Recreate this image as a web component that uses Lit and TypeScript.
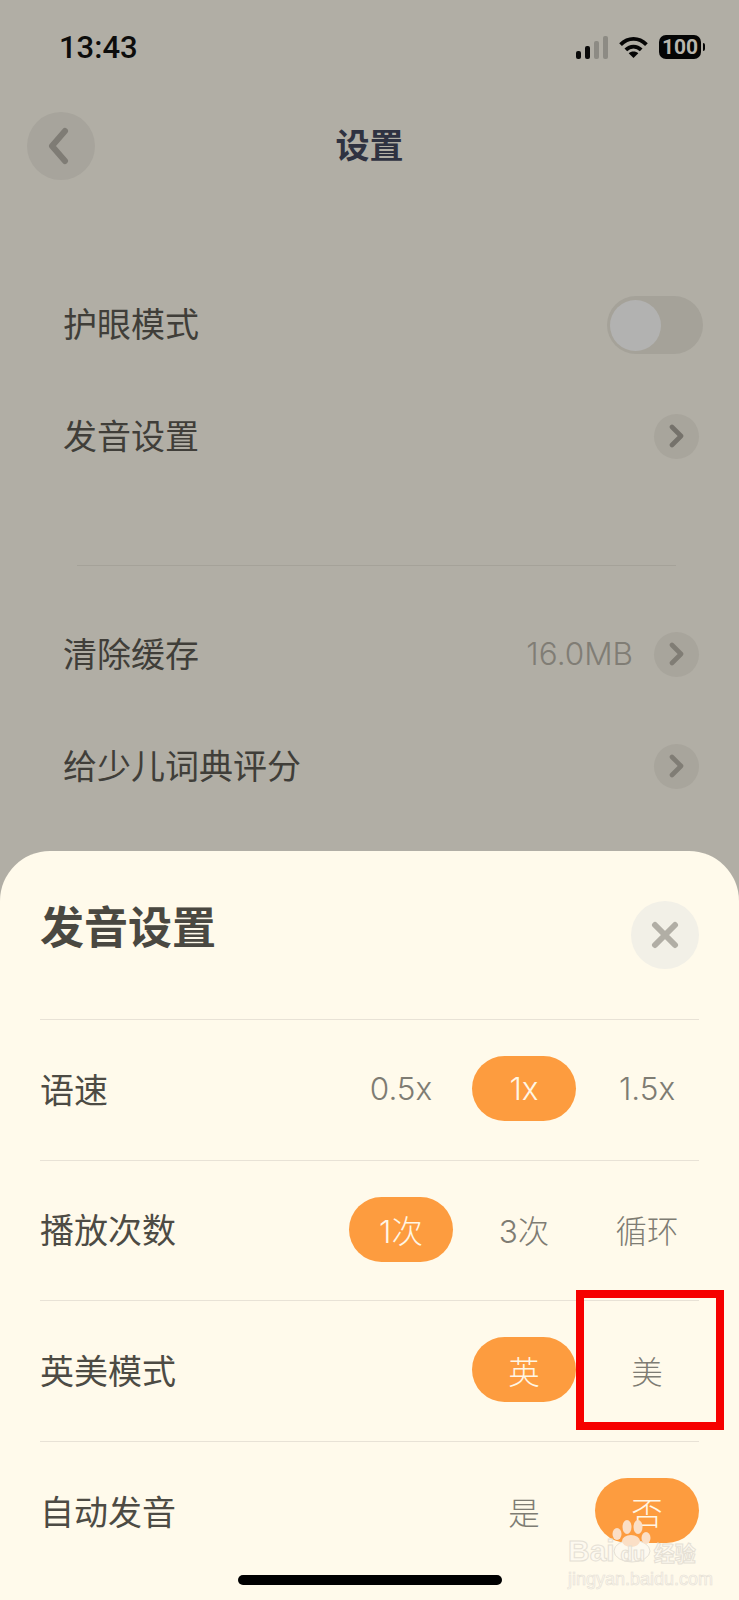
import { LitElement, html, css, svg } from "lit";
import { customElement } from "lit/decorators.js";

const rightChevron = (color: string) => svg`
  <svg width="15" height="24" viewBox="0 0 15 24" fill="none">
    <path d="M3 3 L12 12 L3 21" stroke=${color} stroke-width="4.6" stroke-linecap="round" stroke-linejoin="round"/>
  </svg>`;

type Opt = { t: string; on?: boolean };
const rows: { label: string; opts: Opt[] }[] = [
  { label: "语速", opts: [{ t: "0.5x" }, { t: "1x", on: true }, { t: "1.5x" }] },
  { label: "播放次数", opts: [{ t: "1次", on: true }, { t: "3次" }, { t: "循环" }] },
  { label: "英美模式", opts: [{ t: "英", on: true }, { t: "美" }] },
  { label: "自动发音", opts: [{ t: "是" }, { t: "否", on: true }] },
];

@customElement("app-root")
export class AppRoot extends LitElement {
  static styles = css`
    :host {
      display: block;
      position: relative;
      width: 739px;
      height: 1600px;
      overflow: hidden;
      background: #b1aea5;
      font-family: "Inter", "Noto Sans CJK SC", sans-serif;
    }
    .status {
      display: flex;
      justify-content: space-between;
      align-items: center;
      height: 34px;
      padding: 30px 38px 0 59px;
    }
    .time { font: 500 31px/36px "Roboto", sans-serif; color: #0d0d0c; padding-top: 2px; }
    .sicons { display: flex; align-items: center; gap: 10px; }
    .batt {
      width: 42px; height: 24px; border-radius: 7px; background: #050505; color: #b8b5ac;
      font: 700 21px/24px "Roboto", sans-serif; display: flex; align-items: center; justify-content: center;
      position: relative;
    }
    .batt::after {
      content: ""; position: absolute; right: -4px; top: 8px; width: 2px; height: 8px;
      background: #050505; border-radius: 0 2px 2px 0;
    }
    .nav {
      display: flex; align-items: center; justify-content: center; position: relative;
      height: 68px; margin-top: 48px;
    }
    .nav h1 { margin: 0; font-size: 34px; font-weight: 700; color: #2f3241; line-height: 1; }
    .back {
      position: absolute; left: 27px; top: 0; width: 68px; height: 68px; border-radius: 50%;
      background: #a7a49c; display: flex; align-items: center; justify-content: center;
    }
    .back svg { margin-right: 6px; }
    .list { padding: 86px 36px 0 63px; }
    .row { display: flex; align-items: center; justify-content: space-between; height: 112px; }
    .row .lbl { font-size: 34px; color: #403e39; }
    .right { display: flex; align-items: center; gap: 21px; }
    .val { font-size: 31.5px; font-weight: 300; color: #807d75; padding-top: 2px; }
    .arrow {
      width: 45px; height: 45px; border-radius: 50%; background: #a8a59c;
      display: flex; align-items: center; justify-content: center; margin: 4px 4px 0 0;
    }
    .toggle {
      width: 96px; height: 58px; border-radius: 29px; background: #a5a299; position: relative; display: block;
      margin-top: 6px;
    }
    .knob {
      position: absolute; left: 3px; top: 4px; width: 51px; height: 51px; border-radius: 50%; background: #b2b2b1;
    }
    .divider { height: 1px; background: #a5a299; margin: 75px 27px 30px 14px; }

    .sheet {
      position: absolute; left: 0; right: 0; top: 851px; bottom: 0;
      background: #fffaeb; border-radius: 50px 50px 0 0; padding: 0 40px;
      box-sizing: border-box;
    }
    .head { display: flex; justify-content: space-between; align-items: center; height: 168px; box-sizing: border-box; }
    .head h2 { margin: -14px 0 0; font-size: 44px; font-weight: 700; color: #4a4841; line-height: 1; }
    .close {
      width: 68px; height: 68px; border-radius: 50%; background: #f2f0e7;
      display: flex; align-items: center; justify-content: center;
    }
    .opt-row {
      display: flex; justify-content: space-between; align-items: center;
      height: 140.6px; box-sizing: border-box; border-top: 1.5px solid #e8e2d6; padding-bottom: 2px;
    }
    .opt-row .lbl { font-size: 34px; color: #4d4b44; padding-bottom: 1px; }
    .opts { display: flex; gap: 19px; }
    .opt {
      width: 104px; height: 65px; border-radius: 32.5px; display: flex; align-items: center; justify-content: center;
      font-size: 31.5px; font-weight: 300; color: #7e7c73;
    }
    .opt.on { background: #fd9c3f; color: #fff6e5; }

    .mark {
      position: absolute; left: 576px; top: 1290px; width: 148px; height: 140px; box-sizing: border-box;
      border: 8px solid #f60000;
    }
    .home {
      position: absolute; left: 238px; top: 1575px; width: 264px; height: 10px; border-radius: 5px; background: #000;
    }
    .wm {
      position: absolute; left: 568px; top: 1520px; width: 135px;
      color: #fdf9ef; -webkit-text-stroke: 1px #e5e0d5;
    }
    .wm svg { position: absolute; left: 0; top: 0; }
    .wm .big {
      position: relative; margin-top: 16px; height: 30px; display: flex; align-items: baseline; white-space: nowrap;
      font: 700 30px/30px "Liberation Sans", sans-serif;
    }
    .wm .du { width: 36px; text-align: center; font-size: 20px; }
    .wm .jy { font: 700 21px/30px "Noto Sans CJK SC", sans-serif; margin-left: 3px; }
    .wm .small {
      position: relative; margin-top: 3px; font: 400 18px/20px "Liberation Sans", sans-serif; white-space: nowrap;
      -webkit-text-stroke: .6px #e5e0d5;
    }
  `;

  render() {
    return html`
      <div class="status">
        <span class="time">13:43</span>
        <span class="sicons">
          <svg width="32" height="23" viewBox="0 0 32 23">
            <rect x="0" y="15" width="5" height="8" rx="2" fill="#0a0a0a"/>
            <rect x="9" y="10" width="5" height="13" rx="2" fill="#0a0a0a"/>
            <rect x="18" y="5" width="5" height="18" rx="2" fill="#8d8b84"/>
            <rect x="27" y="0" width="5" height="23" rx="2" fill="#8d8b84"/>
          </svg>
          <svg width="31" height="23" viewBox="0 0 31 24" fill="none" stroke="#050505" stroke-width="4">
            <path d="M2 9 C10 1 21 1 29 9"/>
            <path d="M7.5 14.5 C12 10 19 10 23.5 14.5"/>
            <path d="M15.5 23 L10.5 18 C13 15.5 18 15.5 20.5 18 Z" fill="#050505" stroke="none"/>
          </svg>
          <span class="batt">100</span>
        </span>
      </div>
      <div class="nav">
        <div class="back">
          <svg width="24" height="38" viewBox="0 0 24 38" fill="none">
            <path d="M19 4 L6 19 L19 34" stroke="#7f7c75" stroke-width="6" stroke-linecap="round" stroke-linejoin="round"/>
          </svg>
        </div>
        <h1>设置</h1>
      </div>
      <div class="list">
        <div class="row"><span class="lbl">护眼模式</span><span class="toggle"><span class="knob"></span></span></div>
        <div class="row"><span class="lbl">发音设置</span><span class="arrow">${rightChevron("#75726b")}</span></div>
        <div class="divider"></div>
        <div class="row"><span class="lbl">清除缓存</span><span class="right"><span class="val">16.0MB</span><span class="arrow">${rightChevron("#807d75")}</span></span></div>
        <div class="row"><span class="lbl">给少儿词典评分</span><span class="arrow">${rightChevron("#807d75")}</span></div>
      </div>

      <div class="sheet">
        <div class="head">
          <h2>发音设置</h2>
          <span class="close">
            <svg width="28" height="28" viewBox="0 0 28 28" fill="none" stroke="#b1aea5" stroke-width="6" stroke-linecap="round">
              <path d="M4 4 L24 24 M24 4 L4 24"/>
            </svg>
          </span>
        </div>
        ${rows.map(
          (r) => html`<div class="opt-row">
            <span class="lbl">${r.label}</span>
            <span class="opts">${r.opts.map((o) => html`<span class="opt ${o.on ? "on" : ""}">${o.t}</span>`)}</span>
          </div>`
        )}
      </div>

      <div class="mark"></div>
      <div class="wm">
        <svg width="135" height="45" viewBox="0 0 135 45">
          <ellipse cx="64" cy="31" rx="18" ry="11" fill="#fdf9ef" stroke="#e5e0d5"/>
          <g fill="#fbdfc6">
            <ellipse cx="49" cy="14" rx="4.5" ry="6"/>
            <ellipse cx="59" cy="7" rx="4.5" ry="7"/>
            <ellipse cx="70" cy="7" rx="4.5" ry="7"/>
            <ellipse cx="78" cy="18" rx="4.5" ry="6"/>
            <ellipse cx="63" cy="21" rx="9" ry="6"/>
          </g>
        </svg>
        <div class="big">Bai<span class="du">du</span><span class="jy">经验</span></div>
        <div class="small">jingyan.baidu.com</div>
      </div>
      <div class="home"></div>
    `;
  }
}
